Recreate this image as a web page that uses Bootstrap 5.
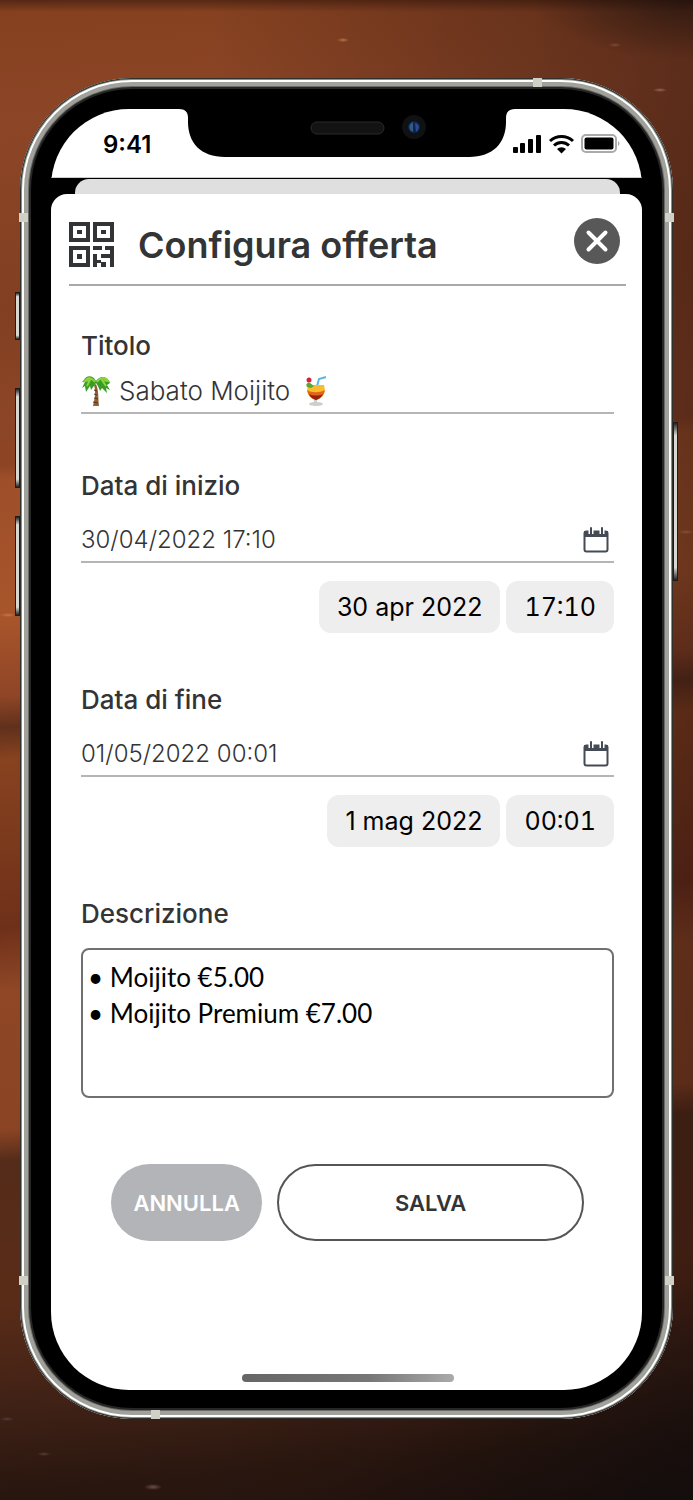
<!DOCTYPE html>
<html lang="it">
<head>
<meta charset="utf-8">
<meta name="viewport" content="width=device-width, initial-scale=1">
<title>Configura offerta</title>
<link href="https://cdn.jsdelivr.net/npm/bootstrap@5.3.0/dist/css/bootstrap.min.css" rel="stylesheet">
<style>
:root { --ink: #333435; --rule: #a9a9aa; }
body {
  font-family: Inter, "Noto Sans", sans-serif;
  color: var(--ink);
  min-height: 100vh;
  padding: 78px 20px 80px;
  background:
    radial-gradient(ellipse 6px 2px at 343px 40px, #b9764e, transparent),
    radial-gradient(ellipse 7px 2px at 660px 90px, #9b6650, transparent),
    radial-gradient(ellipse 7px 2px at 615px 45px, #7c4a35, transparent),
    radial-gradient(ellipse 9px 3px at 153px 1487px, #6a5045, transparent),
    radial-gradient(ellipse 7px 2px at 44px 1454px, #573c32, transparent),
    radial-gradient(ellipse 7px 2px at 7px 1419px, #573c32, transparent),
    radial-gradient(ellipse 8px 2px at 686px 532px, #85503a, transparent),
    radial-gradient(ellipse 8px 2px at 8px 615px, #c9744a, transparent),
    radial-gradient(ellipse 160px 60px at 100% 0, rgba(20, 14, 12, .6), transparent),
    linear-gradient(rgba(40, 16, 8, .5), transparent 12px),
    linear-gradient(150deg, transparent 88%, rgba(14, 12, 12, .7) 100%),
    linear-gradient(90deg, transparent 30%, rgba(25, 10, 10, .42) 100%),
    linear-gradient(176deg, #84401f 0%, #8c4627 8%, #823f21 20%, #8c4527 27%, #8c4425 30%, #9e4f29 31%, #a8552b 40%, #8f4526 45%, #60301c 47%, #87421f 49%, #6f301a 60%, #8f4726 64%, #8a4424 73%, #552c19 75%, #5a2c18 84%, #3f2116 91%, #2a170f 96%, #24130f 100%) fixed;
}
.phone {
  position: relative;
  padding: 31px 31px 29px;
  border-radius: 112px;
  background: #000;
  box-shadow: inset 0 0 0 1px #30302d, inset 0 0 0 2px #8d8d88, inset 0 0 0 4px #fff, inset 0 0 0 8px #a0a19a, inset 0 0 0 9px #6a6b66, inset 0 0 0 11px #262626;
}
.side-key { position: absolute; width: 5px; background: linear-gradient(#222, #d8d8d2 8%, #d8d8d2 92%, #222); border: 1px solid #1c1c1a; }
.key-left { right: 100%; }
.key-right { left: 100%; }
.key-mute { top: 214px; height: 48px; }
.key-up { top: 310px; height: 100px; }
.key-down { top: 438px; height: 100px; }
.key-power { top: 344px; height: 159px; }
.antenna { position: absolute; width: 9px; height: 9px; background: #cfd0c6; }
.ant-l { left: -1px; } .ant-r { right: -1px; }
.ant-hi { top: 135px; } .ant-lo { bottom: 134px; }
.ant-t { top: 0; right: 131px; } .ant-b { bottom: 0; left: 131px; }
.display { border-radius: 78px; overflow: hidden; background: #000; }
.status { height: 69px; background: #fff; border-bottom: 1px solid #ccc; }
.status-side { flex: 1 1 0; min-width: 0; }
.clock { font-size: 24px; line-height: 32px; font-weight: 600; color: #000; margin: 20px 0 0 52px; white-space: nowrap; }
.signals { display: block; margin: 24px 0 0 -4px; }
.behind { height: 15px; margin: 1px 22px 0 24px; border-radius: 14px 14px 0 0; background: #dfdfdf; }
.sheet { background: #fff; border-radius: 16px 16px 0 0; padding: 24px 16px 8px 18px; }
.title-row { padding-bottom: 15px; border-bottom: 2px solid var(--rule); }
.title-row h1 { font-size: 36px; line-height: 48px; font-weight: 600; margin: 3px 0 0 24px; }
.round-close { width: 46px; height: 46px; border-radius: 50%; background: #585858; margin-right: 6px; padding: 0; border: 0; }
form { padding: 44px 12px 0; }
.caption { display: block; font-size: 26px; line-height: 32px; font-weight: 450; }
.line-box { display: flex; align-items: center; border-bottom: 2px solid #b5b5b6; }
.line-box input { border: 0; padding: 0; background: none; outline: 0; color: var(--ink); line-height: 32px; font-weight: 300; min-width: 0; }
.title-box { height: 52px; padding-top: 8px; }
.title-box input { width: 183px; margin-left: 8px; font-size: 26px; }
.date-box { height: 61px; padding-top: 16px; }
.date-box input { flex: 1; font-size: 24px; }
.icon-only { border: 0; background: none; padding: 0; margin-right: 4px; line-height: 0; }
.pick-row { gap: 6px; margin-top: 18px; }
.pill { border: 0; border-radius: 12px; background: #eee; color: #000; height: 52px; font-size: 25px; line-height: 32px; padding: 0 18px; white-space: nowrap; }
.pill-time { min-width: 107px; font-variant-numeric: tabular-nums; }
.group { margin-bottom: 51px; }
.group-title { margin-bottom: 56px; }
.notes { display: block; width: 100%; height: 150px; margin-top: 18px; padding: 9px 5px; border: 2px solid #707071; border-radius: 8px; color: #000; font-family: Lato, sans-serif; font-size: 26px; line-height: 36px; resize: none; outline: 0; overflow: hidden; }
.actions { margin: 66px 30px 0; gap: 15px; }
.actions button { height: 77px; border-radius: 39px; font-size: 22px; line-height: 32px; font-weight: 600; padding: 0; }
.cancel { flex: 1 1 0; border: 0; background: #b3b4b8; color: #fff; }
.save { flex: 2 1 0; border: 2px solid #555556; background: #fff; color: var(--ink); }
.home-bar { width: 212px; height: 8px; border-radius: 4px; margin: 133px auto 0; background: linear-gradient(90deg, #666, #777 60%, #aaa); }
</style>
</head>
<body>
<svg class="d-none" aria-hidden="true">
  <symbol id="calendar" viewBox="0 0 28 28">
    <rect x="2.500" y="5.500" width="23" height="20" rx="2" fill="none" stroke="#454b55" stroke-width="2"/>
    <path d="M2 5h24v6H2z" fill="#454b55"/>
    <path d="M9 3v5M20 3v5" stroke="#fff" stroke-width="5"/>
    <path d="M9 2v6M20 2v6" stroke="#454b55" stroke-width="2" stroke-linecap="round"/>
  </symbol>
</svg>
<div class="phone">
  <span class="side-key key-left key-mute"></span><span class="side-key key-left key-up"></span><span class="side-key key-left key-down"></span><span class="side-key key-right key-power"></span>
  <span class="antenna ant-l ant-hi"></span><span class="antenna ant-r ant-hi"></span><span class="antenna ant-l ant-lo"></span><span class="antenna ant-r ant-lo"></span><span class="antenna ant-t"></span><span class="antenna ant-b"></span>
  <div class="display">
    <div class="status d-flex align-items-start">
      <div class="status-side"><div class="clock">9:41</div></div>
      <svg class="flex-shrink-0" width="336" height="49" viewBox="0 0 336 49" aria-hidden="true">
        <path d="M0 0H336C330 0 327 3 327 9V13C327 34 314 48 290 48H46C22 48 9 34 9 13V9C9 3 6 0 0 0Z"/>
        <rect x="132" y="13" width="73" height="12" rx="6" fill="#131313" stroke="#2b2b2b"/>
        <circle cx="235" cy="18" r="12" fill="#101113"/><circle cx="235" cy="18" r="6" fill="#142447"/>
        <path d="M234 13c-5 2-5 8 0 10z" fill="#2b5c8c"/><path d="M236 14c5 1 5 6 1 9z" fill="#2a4a91"/>
      </svg>
      <div class="status-side">
        <svg class="signals" width="110" height="24" viewBox="0 0 110 24" aria-hidden="true">
          <rect x="2" y="14" width="5" height="6" rx="1"/><rect x="9" y="10" width="5" height="10" rx="1"/><rect x="17" y="6" width="5" height="14" rx="1"/><rect x="25" y="2" width="5" height="18" rx="1"/>
          <g fill="none" stroke="#000" stroke-width="3"><path d="M39 8a17 17 0 0 1 23 0"/><path d="M43 12.500a11 11 0 0 1 15 0"/></g><path d="M46 16a6.500 6.500 0 0 1 9 0l-4.500 4.500z"/>
          <rect x="71" y="2" width="34" height="17" rx="4" fill="#fff" stroke="#aaa" stroke-width="2"/><rect x="73.500" y="4.500" width="29" height="12" rx="2"/><path d="M107 8c2 1 2 4 0 5z" fill="#aaa"/>
        </svg>
      </div>
    </div>
    <div class="behind"></div>
    <main class="sheet">
      <header class="title-row d-flex align-items-start">
        <svg width="45" height="45" viewBox="0 0 45 45" class="mt-1 flex-shrink-0" fill="#333435" aria-hidden="true">
          <g fill="none" stroke="#333435" stroke-width="4"><path d="M2 2h17v16H2zM26 2h17v16H26zM2 26h17v17H2z"/></g>
          <path d="M8 8h5v4H8zM32 8h5v4h-5zM8 32h5v5H8zM24 24h9v4h-9zM36 24h9v21h-4v-9h-9v-4h9v-4h-5zM24 32h4v13h-4zM32 40h5v5h-5zM28 38h4v3h-4z"/>
        </svg>
        <h1>Configura offerta</h1>
        <button type="button" class="round-close ms-auto" aria-label="Chiudi"><svg width="46" height="46" viewBox="0 0 46 46" class="d-block"><path d="M14.500 14.500l17 17M31.500 14.500l-17 17" stroke="#fff" stroke-width="4" stroke-linecap="round"/></svg></button>
      </header>
      <form>
        <div class="group-title">
          <label class="caption" for="titolo">Titolo</label>
          <div class="line-box title-box">
            <svg width="30" height="32" viewBox="0 0 30 32" aria-hidden="true">
              <path d="M15 9c3 7 2 14 3 22h-6c2-8 3-14 1-21z" fill="#936033"/><path d="M13 15l3 1M13 19l3 1M13 23l4 1M12 27l5 1" stroke="#54331d" stroke-width="1"/>
              <path d="M15 6C11-1 5 1 3 5l-2 2 3 0-3 6 3-2 1 6 4-6 1 4 5-7c2 3 3 5 4 8l2-3 5 5-1-5 4 2-3-5 3-2C27 2 20-1 15 6z" fill="#399c25"/><path d="M14 7C10 2 7 2 4 6l5-1-3 6M16 7c3-5 8-5 11-1l-6-1 4 6" fill="none" stroke="#8ad33c" stroke-width="2"/>
            </svg>
            <input id="titolo" type="text" value="Sabato Moijito">
            <svg width="28" height="32" viewBox="0 0 28 32" aria-hidden="true">
              <path d="M15 11l2-7 7-2" fill="none" stroke="#5bb5e0" stroke-width="2"/>
              <path d="M12 23h3v4c4 0 6 1 6 2s-3 2-7 2-7-1-7-2 2-2 5-2z" fill="#d0cecb"/>
              <path d="M6 10h16c2 7 0 13-8 15-8-2-10-8-8-15z" fill="#f9bd2c"/><path d="M5 15c4 3 13 3 18 0-1 5-4 9-9 10-5-1-8-5-9-10z" fill="#e2641b"/><path d="M7 19c4 2 10 2 14 0-2 3-4 5-7 6-3-1-6-3-7-6z" fill="#94200f"/>
              <path d="M5 12c-2-3 1-5 3-4l4 3-3 2z" fill="#59a632"/><circle cx="7" cy="5" r="2.500" fill="#d8213a"/>
            </svg>
          </div>
        </div>
        <div class="group">
          <label class="caption" for="inizio">Data di inizio</label>
          <div class="line-box date-box">
            <input id="inizio" type="text" value="30/04/2022 17:10">
            <button type="button" class="icon-only" aria-label="Scegli la data di inizio"><svg width="28" height="28"><use href="#calendar"/></svg></button>
          </div>
          <div class="d-flex justify-content-end pick-row"><button type="button" class="pill">30 apr 2022</button><button type="button" class="pill pill-time">17:10</button></div>
        </div>
        <div class="group">
          <label class="caption" for="fine">Data di fine</label>
          <div class="line-box date-box">
            <input id="fine" type="text" value="01/05/2022 00:01">
            <button type="button" class="icon-only" aria-label="Scegli la data di fine"><svg width="28" height="28"><use href="#calendar"/></svg></button>
          </div>
          <div class="d-flex justify-content-end pick-row"><button type="button" class="pill">1 mag 2022</button><button type="button" class="pill pill-time">00:01</button></div>
        </div>
        <div>
          <label class="caption" for="descrizione">Descrizione</label>
          <textarea id="descrizione" class="notes">• Moijito €5.00
• Moijito Premium €7.00</textarea>
        </div>
        <div class="actions d-flex">
          <button type="button" class="cancel">ANNULLA</button>
          <button type="submit" class="save">SALVA</button>
        </div>
      </form>
      <div class="home-bar"></div>
    </main>
  </div>
</div>
<script src="https://cdn.jsdelivr.net/npm/bootstrap@5.3.0/dist/js/bootstrap.bundle.min.js"></script>
</body>
</html>
